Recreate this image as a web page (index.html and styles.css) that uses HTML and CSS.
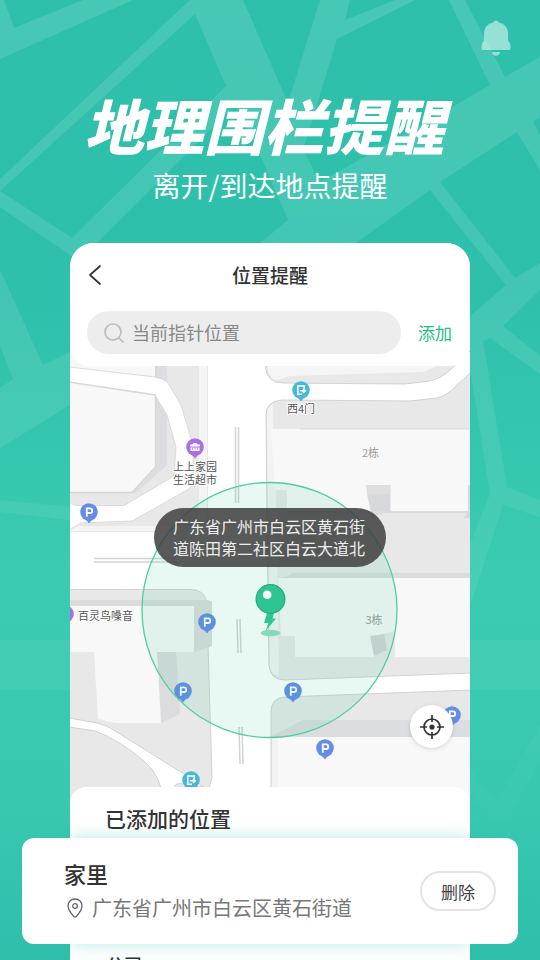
FILE: index.html
```html
<!DOCTYPE html>
<html lang="zh-CN">
<head>
<meta charset="utf-8">
<meta name="viewport" content="width=device-width, initial-scale=1">
<title>地理围栏提醒</title>
<link rel="stylesheet" href="styles.css">
</head>
<body>
<div class="page">
  <svg class="backdrop" viewBox="0 0 540 960" preserveAspectRatio="xMidYMin slice" aria-hidden="true">
    <defs>
      <linearGradient id="fade" x1="0" y1="0" x2="0" y2="960" gradientUnits="userSpaceOnUse">
        <stop offset="0" stop-color="#fff" stop-opacity=".12"/>
        <stop offset=".4" stop-color="#fff" stop-opacity=".09"/>
        <stop offset=".7" stop-color="#fff" stop-opacity=".04"/>
        <stop offset=".9" stop-color="#fff" stop-opacity="0"/>
      </linearGradient>
    </defs>
    <g fill="url(#fade)">
      <path d="M0 0H4L14 28L83 0H133L0 59Z"/>
      <path d="M190 0H243L288 103L320 0H350L345 20L395 0H415L337 39L303 150L320 182L430 120L490 85L449 0H465L505 77L540 57V117L533 122L540 135V170L517 132L440 182L515 278L540 263V290L503 326L540 356V374L490 338L483 341L507 487L540 500V517L503 505L462 630V565L490 494L468 355V318L506 285L430 190L360 240L340 260H240L288 220L258 150L235 105L93 247L80 262L0 207V191L72 238L226 86L195 14L0 191V179Z"/>
      <path d="M0 270L43 365L70 352V405L0 448V388L13 379L0 346Z"/>
      <path d="M0 500L70 507V520L0 512Z"/>
      <path d="M0 640H540V690H0Z"/>
      <path d="M540 725L498 801L462 760V785L495 820H508L540 760Z"/>
    </g>
  </svg>

  <svg class="bell" viewBox="0 0 30 37" aria-hidden="true">
    <path fill="#fff" fill-opacity=".5" d="M12 2.500Q15-1.500 18 2.500C24 4 27 8 27 14V21Q30 23 29.500 28Q29.500 30 28 30H2Q.5 30 .5 28Q.5 23 3 21V14C3 8 6 4 12 2.500ZM11 32H19C18.500 37 11.500 37 11 32Z"/>
  </svg>

  <header class="hero">
    <h1 class="hero-title">地理围栏提醒</h1>
    <p class="hero-subtitle">离开/到达地点提醒</p>
  </header>

  <main class="phone">
    <div class="toolbar">
      <div class="title-row">
        <button class="back" type="button" aria-label="返回">
          <svg viewBox="0 0 14 22"><path d="M12 2L2 11L12 20" fill="none" stroke="#333" stroke-width="1.700" stroke-linecap="round" stroke-linejoin="round"/></svg>
        </button>
        <h2 class="screen-title">位置提醒</h2>
      </div>
      <form class="search-row">
        <label class="search">
          <svg class="search-icon" viewBox="0 0 20 20" aria-hidden="true"><g fill="none" stroke="#bdbdbd" stroke-width="1.700" stroke-linecap="round"><circle cx="9" cy="9" r="8"/><path d="M15 15L19 19"/></g></svg>
          <input class="search-input" type="text" placeholder="当前指针位置" aria-label="位置">
        </label>
        <button class="add" type="button">添加</button>
      </form>
    </div>

    <section class="map" aria-label="地图">
      <svg class="map-art" viewBox="70 350 400 453">
        <defs>
          <g id="drop"><path d="M-3.500 7L0 11.500L3.500 7Z"/><circle r="8.800"/></g>
          <g id="parking"><use href="#drop" fill="#668ceb"/><path d="M-2.200 4.800V-3.600H1Q3.200-3.600 3.200-1.300Q3.200 1 1 1H-2.200" fill="none" stroke="#fff" stroke-width="1.800"/></g>
          <g id="gate"><use href="#drop" fill="#4ab8d6"/><path d="M3.200-1.500V-4H-3.200V4.200H1M-1 .8H4M2-1.300L4.300.8L2 2.900" fill="none" stroke="#fff" stroke-width="1.500"/></g>
        </defs>
        <path fill="#fff" d="M70 350H470V803H70Z"/>

        <!-- north-west block -->
        <g>
          <path fill="#e8e8e8" stroke="#d2d2d2" d="M69 350H207V531H69Z"/>
          <path fill="#f4f4f4" d="M199 350H207V531H199ZM70 530L78 526H199V531H70Z"/>
          <path fill="#f7f7f7" d="M70 350H155V377L70 367Z"/>
          <path fill="#d9d9d7" d="M155 350H158V379L155 377Z"/>
          <path fill="#dddee1" d="M158 350H167V382L158 379Z"/>
          <path fill="#fff" stroke="#d4d4d4" stroke-width=".8" d="M69 367L155 377Q165 379 168 383L181 405L193 445V480Q192 488 187 490L132 521L81 523L69 530V500Q71 505 76 505.500H124L174 476L176 447L167 415L155 395L69 383Z"/>
          <path fill="#dcdde0" d="M155 395L167 415V465L136 493H131Z"/>
          <path fill="#f8f8f8" stroke="#d8d8d3" stroke-width="1.500" d="M68 382L155.500 395V467L132 492.500H68Z"/>
        </g>

        <!-- south-west block -->
        <g>
          <path fill="#e8e8e8" stroke="#d2d2d2" d="M69 589.500H190Q206 589 207 605L209 680L212 777L205 804H69Z"/>
          <path fill="#dcdcdc" d="M70 600H207L212 601V646L195 652H194V606H70Z"/>
          <path fill="#dcdcde" d="M157 652H176L180 714L161 723Z"/>
          <path fill="#f8f8f8" d="M70 606H194V652H157L161 723H115L98 719L94 652H70Z"/>
          <path fill="#fff" stroke="#d2d2d2" d="M69 718L97 723Q106 725 112 729L184 774L204 787V804H165Q160 774 145 762Q120 740 95 731L69 727Z"/>
          <path fill="#e8e8e8" stroke="#d2d2d2" d="M173 788Q176 782 184 784L204 787V796H173Z"/>
        </g>

        <!-- north-east strip -->
        <path fill="#e8e8e8" stroke="#d2d2d2" d="M265.500 350V367Q267 383 283 383L405 384L430 381Q442 378 450 370L462 359L471 350Z"/>
        <path fill="#f5f5f5" d="M268 350V370Q270 380 278 380L290 376L424 372L437 366L450 350Z"/>

        <!-- middle-east block -->
        <g>
          <path fill="#e8e8e8" stroke="#d2d2d2" d="M471 372L455 387Q448 395 437 398L410 401L282 400Q266 401 266 415L267 520L269 665Q270 680 285 680L471 673Z"/>
          <path fill="#f3f3f3" d="M267 415Q267 407 273 404V429L276 500L279 675Q270 676 270 665Z"/>
          <path fill="#f8f8f8" d="M271 429H470V511H391V485H366L371 511H287V490H275Z"/>
          <path fill="#d8d8d8" d="M300 428.500H470V429.500H300Z"/>
          <path fill="#dfdfdf" d="M366 485H390V494H367Z"/>
          <path fill="#d8d9dc" d="M367 494H390V511L372 517ZM468 485H470V518H464L468 511Z"/>
          <path fill="#dcdcdc" d="M287 511H468V513H287ZM285 577L293 573H470V578H279Z"/>
          <path fill="#f8f8f8" d="M278 578H470V657H295V636H281Z"/>
          <path fill="#e8e8e8" d="M383 634L395 631V657H374Z"/>
          <path fill="#d3d5d7" d="M370 636L384 634L387 650L374 656Z"/>
        </g>

        <!-- south-east block -->
        <g>
          <path fill="#e8e8e8" stroke="#d2d2d2" d="M471 690L285 697Q271 698 271 712V804H471Z"/>
          <path fill="#f3f3f3" d="M272 737H278V803H272Z"/>
          <path fill="#dcdde0" d="M272 736L303 720H470V737H272Z"/>
          <path fill="#f8f8f8" d="M278 737H470V803H278Z"/>
        </g>

        <g fill="none" stroke="#d3d3d3" stroke-width="1.500">
          <path d="M94 558.500H178M94 562H178M235.500 427V503M238.500 427V503M237 619L238 653M240 619L241 653M239 727L240 764M242 727L243 764"/>
        </g>

        <use href="#parking" x="89" y="512"/>
        <use href="#parking" x="207" y="622"/>
        <use href="#parking" x="183" y="691"/>
        <use href="#parking" x="293" y="691"/>
        <use href="#parking" x="325" y="748"/>
        <use href="#parking" x="452" y="715"/>
        <use href="#gate" x="301" y="390"/>
        <use href="#gate" x="191" y="780"/>
        <use href="#drop" x="195" y="447" fill="#aa70e3"/>
        <path fill="#fff" d="M190 444.500H192.500L193.500 443H196.500L197.500 444.500H200V446.500H190ZM190.500 447.500H199.500V451H190.500Z"/>
        <path stroke="#aa70e3" stroke-width=".7" d="M192.500 447.500V450M195 447.500V450M197.500 447.500V450"/>
        <use href="#drop" x="65" y="614" fill="#aa70e3"/>

        <g class="poi" text-anchor="middle">
          <text x="301" y="413">西4门</text>
          <text x="195" y="471">上上家园</text>
          <text x="195" y="484">生活超市</text>
          <text x="105.500" y="620">百灵鸟嗓音</text>
        </g>
        <g class="building" text-anchor="middle">
          <text x="370.500" y="457">2栋</text>
          <text x="374" y="624">3栋</text>
        </g>

        <circle cx="269.500" cy="610" r="127.500" fill="#20bc83" fill-opacity=".1" stroke="#4fcea0" stroke-width="1.300"/>

        <ellipse cx="270.500" cy="633" rx="9.800" ry="3.300" fill="#87d9ba"/>
        <path fill="#2ec592" d="M267 613H274L272.500 618.500H276L265.500 631L268.500 623H264Z"/>
        <circle cx="270.500" cy="599" r="14.400" fill="#2ec592" stroke="#25ac7f" stroke-width="1.200"/>
        <circle cx="267.200" cy="594.700" r="4.300" fill="#fff"/>
      </svg>
      <p class="bubble">广东省广州市白云区黄石街道陈田第二社区白云大道北</p>
      <button class="locate" type="button" aria-label="定位">
        <svg viewBox="0 0 24 24"><g fill="none" stroke="#333" stroke-width="1.700"><circle cx="12" cy="12" r="8"/><path d="M12 0V7M12 17V24M0 12H7M17 12H24"/></g><circle cx="12" cy="12" r="2.600" fill="#333"/></svg>
      </button>
    </section>

    <section class="sheet">
      <h3 class="sheet-title">已添加的位置</h3>
      <div class="glow">
        <article class="place">
          <div class="place-info">
            <h4 class="place-name">家里</h4>
            <p class="place-address">
              <svg class="pin" viewBox="0 0 16 20" aria-hidden="true"><g fill="none" stroke="#666" stroke-width="1.300"><path d="M8 1C3.800 1 1 4 1 7.800C1 11.500 4 15.500 6.800 18.500Q8 19.600 9.200 18.500C12 15.500 15 11.500 15 7.800C15 4 12.200 1 8 1Z"/><circle cx="8" cy="8" r="2.300"/></g></svg>
              <span>广东省广州市白云区黄石街道</span>
            </p>
          </div>
          <button class="delete" type="button">删除</button>
        </article>
      </div>
      <h4 class="next-name">公司</h4>
    </section>
  </main>
</div>
</body>
</html>
```

FILE: styles.css
```css
* {
  box-sizing: border-box;
}

body,
h1,
h2,
h3,
h4,
p {
  margin: 0;
}

body,
button,
input {
  font-family: "Noto Sans CJK SC", sans-serif;
}

button {
  padding: 0;
  border: 0;
  background: none;
  cursor: pointer;
}

svg {
  display: block;
}

.page {
  position: relative;
  height: 100vh;
  overflow: hidden;
  background: linear-gradient(#2ec0ab 0%, #2ec0ab 30%, #3bcbb2 60%, #38c8b0 85%, #2ebeaa 100%);
}

.backdrop {
  position: absolute;
  inset: 0;
  width: 100%;
  height: 100%;
}

.bell {
  position: absolute;
  top: 20px;
  right: 29px;
  width: 30px;
  height: 37px;
}

.hero {
  position: relative;
  padding-top: 88px;
  color: #fff;
  text-align: center;
}

.hero-title {
  padding-right: 12px;
  font-size: 60px;
  font-style: italic;
  font-weight: 900;
  line-height: 72px;
}

.hero-subtitle {
  height: 83px;
  padding-top: 8px;
  font-size: 28px;
  font-weight: 400;
  line-height: 34px;
}

.phone {
  position: relative;
  margin: 0 70px;
  border-radius: 24px 24px 0 0;
  background: #fff;
}

.toolbar {
  position: relative;
  z-index: 1;
  padding-bottom: 12px;
  border-radius: 24px 24px 20px 20px;
  background: #fff;
}

.title-row {
  display: grid;
  grid-template-columns: 32px 1fr 32px;
  align-items: center;
  height: 64px;
  margin-bottom: 4px;
  padding: 0 16px;
}

.back svg {
  width: 14px;
  height: 22px;
  margin-left: 2px;
}

.screen-title {
  padding-bottom: 2px;
  color: #333;
  font-size: 19px;
  font-weight: 500;
  text-align: center;
}

.search-row {
  display: flex;
  align-items: center;
  gap: 17px;
  padding: 0 18px 0 17px;
}

.search {
  display: flex;
  flex: 1;
  align-items: center;
  gap: 8px;
  min-width: 0;
  height: 43px;
  padding: 0 17px;
  border-radius: 22px;
  background: #ededed;
}

.search-icon {
  flex: none;
  width: 20px;
  height: 20px;
}

.search-input {
  flex: 1;
  min-width: 0;
  padding: 0 0 2px;
  border: 0;
  outline: 0;
  background: none;
  color: #333;
  font-size: 18px;
}

.search-input::placeholder {
  color: #888;
}

.add {
  color: #1fbf86;
  font-size: 17px;
}

.map {
  position: relative;
  margin-top: -16px;
}

.map-art {
  width: 100%;
  height: auto;
}

.poi {
  fill: #555;
  stroke: #fff;
  stroke-width: 2px;
  paint-order: stroke;
  font-size: 11px;
}

.building {
  fill: #999;
  font-size: 11px;
}

.bubble {
  position: absolute;
  top: 158px;
  left: 50%;
  width: 232px;
  padding: 7px 20px 8px 19px;
  border-radius: 30px;
  background: rgba(60, 60, 60, 0.84);
  color: #eee;
  font-size: 16px;
  line-height: 22px;
  transform: translateX(-50%);
}

.locate {
  position: absolute;
  right: 17px;
  bottom: 55px;
  display: grid;
  place-items: center;
  width: 43px;
  height: 43px;
  border-radius: 50%;
  background: #fff;
  box-shadow: 0 1px 4px rgba(0, 0, 0, 0.15);
}

.locate svg {
  width: 24px;
  height: 24px;
}

.sheet {
  position: relative;
  margin-top: -16px;
  padding-top: 15px;
  border-radius: 16px 16px 0 0;
  background: #fff;
}

.sheet-title {
  position: relative;
  z-index: 1;
  padding: 0 35px;
  color: #333;
  font-size: 21px;
  font-weight: 500;
  line-height: 32px;
}

.glow {
  margin-top: 4px;
  box-shadow: 0 0 16px rgba(46, 192, 171, 0.35);
}

.place {
  display: flex;
  align-items: center;
  justify-content: space-between;
  height: 106px;
  margin: 0 -48px;
  padding: 0 22px 0 42px;
  border-radius: 12px;
  background: #fff;
}

.place-name {
  color: #333;
  font-size: 22px;
  font-weight: 500;
  line-height: 34px;
}

.place-address {
  display: flex;
  align-items: center;
  gap: 9px;
  padding-left: 3px;
  color: #777;
  font-size: 20px;
  line-height: 36px;
}

.pin {
  flex: none;
  width: 16px;
  height: 20px;
}

.delete {
  width: 76px;
  height: 40px;
  border: 2px solid #e4e4e4;
  border-radius: 20px;
  color: #444;
  font-size: 17px;
}

.next-name {
  position: relative;
  margin-top: 8px;
  padding: 0 36px;
  color: #333;
  font-size: 18px;
  font-weight: 500;
  line-height: 24px;
}
```
